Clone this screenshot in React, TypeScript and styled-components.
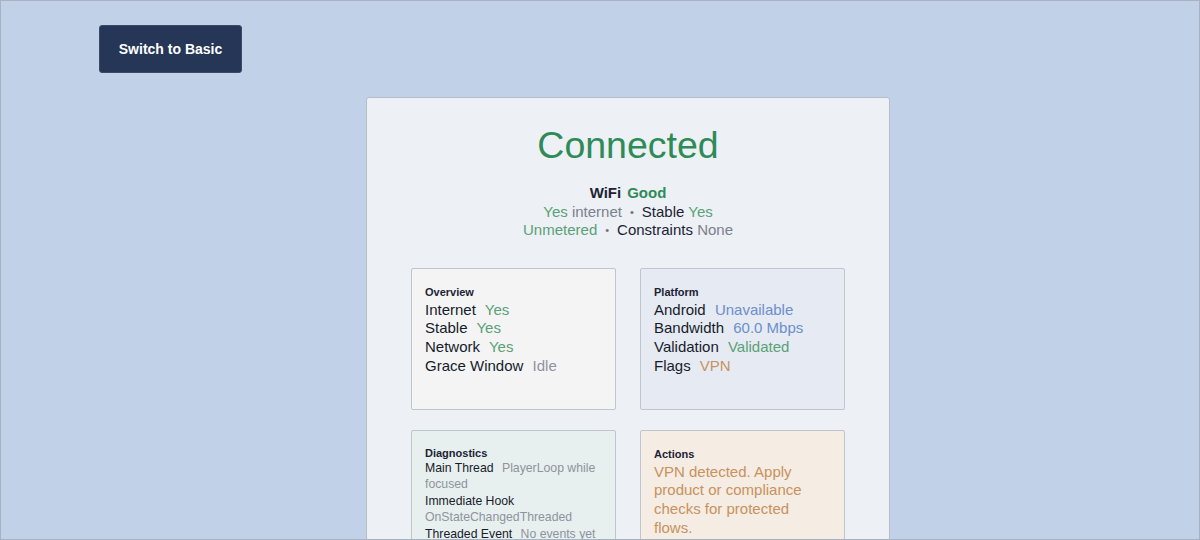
import styled, { createGlobalStyle } from 'styled-components'

const Global = createGlobalStyle`
    html, body {
        margin: 0;
        padding: 0;
        background: #c1d1e7;
        font-family: "Liberation Sans", Arial, sans-serif;
    }
    * { box-sizing: border-box; }
`

const Frame = styled.div`
    height: 540px;
    border: 1px solid #a7b2c3;
    overflow: hidden;
    padding: 24px 42px 0 98px;
`

const SwitchButton = styled.button`
    display: block;
    width: 143px;
    height: 48px;
    background: #253656;
    color: #fff;
    border: 1px solid #3b4a66;
    border-radius: 3px;
    font-family: inherit;
    font-size: 14px;
    font-weight: 700;
    padding-top: 1px;
    cursor: pointer;
`

const Panel = styled.section`
    width: 524px;
    margin: 24px auto 0;
    background: #edf0f5;
    border: 1px solid #b5bdc9;
    border-radius: 3px;
    padding: 23px 44px 30px;
    text-align: center;
`

const Title = styled.h1`
    margin: 0;
    font-size: 37.5px;
    font-weight: 400;
    line-height: 48px;
    color: #2e8b57;
`

const Summary = styled.div`
    margin-top: 15px;
    font-size: 15px;
    line-height: 18.5px;
    color: #1c2333;
`

const Strong = styled.span<{ $tone?: string }>`
    font-weight: 700;
    color: ${p => p.$tone || '#1c2333'};
    margin-right: 6px;
    &:last-child { margin-right: 0; }
`

const Tone = styled.span<{ $tone: string }>`
    color: ${p => p.$tone};
`

const Dot = styled.span`
    color: #6b7280;
    font-size: 11px;
    margin: 0 8px;
    vertical-align: 1px;
`

const Grid = styled.div`
    display: grid;
    grid-template-columns: 205px 205px;
    column-gap: 24px;
    row-gap: 20px;
    margin-top: 28px;
    text-align: left;
`

const Card = styled.div<{ $bg: string; $tight?: boolean }>`
    background: ${p => p.$bg};
    border: 1px solid #bfc5cf;
    border-radius: 2px;
    min-height: 142px;
    padding: ${p => (p.$tight ? '15px' : '16px')} 13px 14px;
`

const CardLabel = styled.div<{ $tight?: boolean }>`
    font-size: 11px;
    font-weight: 700;
    line-height: 14px;
    color: #1c2333;
    margin-bottom: ${p => (p.$tight ? '0' : '2px')};
`

const Row = styled.div<{ $small?: boolean }>`
    font-size: ${p => (p.$small ? '12.25px' : '15px')};
    line-height: ${p => (p.$small ? '16.5px' : '18.75px')};
    color: #161c2b;
`

const Key = styled.span`
    color: #161c2b;
    margin-right: 5px;
`

const Val = styled.span<{ $tone: string }>`
    color: ${p => p.$tone};
`

const Note = styled.p`
    margin: 0;
    font-size: 15px;
    line-height: 18.75px;
    color: #c8925c;
`

const GREEN = '#2e8b57'
const SOFT_GREEN = '#5aa176'
const GRAY = '#7b808c'
const LIGHT_GRAY = '#8e939c'
const BLUE = '#6b8fcb'
const ORANGE = '#c8925c'

type Item = { k: string; v: string; tone: string }

const overview: Item[] = [
    { k: 'Internet', v: 'Yes', tone: SOFT_GREEN },
    { k: 'Stable', v: 'Yes', tone: SOFT_GREEN },
    { k: 'Network', v: 'Yes', tone: SOFT_GREEN },
    { k: 'Grace Window', v: 'Idle', tone: LIGHT_GRAY },
]

const platform: Item[] = [
    { k: 'Android', v: 'Unavailable', tone: BLUE },
    { k: 'Bandwidth', v: '60.0 Mbps', tone: BLUE },
    { k: 'Validation', v: 'Validated', tone: SOFT_GREEN },
    { k: 'Flags', v: 'VPN', tone: ORANGE },
]

const diagnostics: Item[] = [
    { k: 'Main Thread', v: 'PlayerLoop while focused', tone: LIGHT_GRAY },
    { k: 'Immediate Hook', v: 'OnStateChangedThreaded', tone: LIGHT_GRAY },
    { k: 'Threaded Event', v: 'No events yet', tone: LIGHT_GRAY },
]

const Rows = ({ items, small }: { items: Item[]; small?: boolean }) => (
    <>
        {items.map(i => (
            <Row key={i.k} $small={small}>
                <Key>{i.k}</Key> <Val $tone={i.tone}>{i.v}</Val>
            </Row>
        ))}
    </>
)

const App = () => {
    return (
        <>
            <Global />
            <Frame>
                <SwitchButton>Switch to Basic</SwitchButton>
                <Panel>
                    <Title>Connected</Title>
                    <Summary>
                        <div>
                            <Strong>WiFi</Strong>
                            <Strong $tone={GREEN}>Good</Strong>
                        </div>
                        <div>
                            <Tone $tone={SOFT_GREEN}>Yes</Tone> <Tone $tone={GRAY}>internet</Tone>
                            <Dot>•</Dot>
                            Stable <Tone $tone={SOFT_GREEN}>Yes</Tone>
                        </div>
                        <div>
                            <Tone $tone={SOFT_GREEN}>Unmetered</Tone>
                            <Dot>•</Dot>
                            Constraints <Tone $tone={GRAY}>None</Tone>
                        </div>
                    </Summary>
                    <Grid>
                        <Card $bg="#f4f4f5">
                            <CardLabel>Overview</CardLabel>
                            <Rows items={overview} />
                        </Card>
                        <Card $bg="#e6eaf3">
                            <CardLabel>Platform</CardLabel>
                            <Rows items={platform} />
                        </Card>
                        <Card $bg="#e8efef" $tight>
                            <CardLabel $tight>Diagnostics</CardLabel>
                            <Rows items={diagnostics} small />
                        </Card>
                        <Card $bg="#f5ece4">
                            <CardLabel>Actions</CardLabel>
                            <Note>VPN detected. Apply product or compliance checks for protected flows.</Note>
                        </Card>
                    </Grid>
                </Panel>
            </Frame>
        </>
    )
}

export default App
